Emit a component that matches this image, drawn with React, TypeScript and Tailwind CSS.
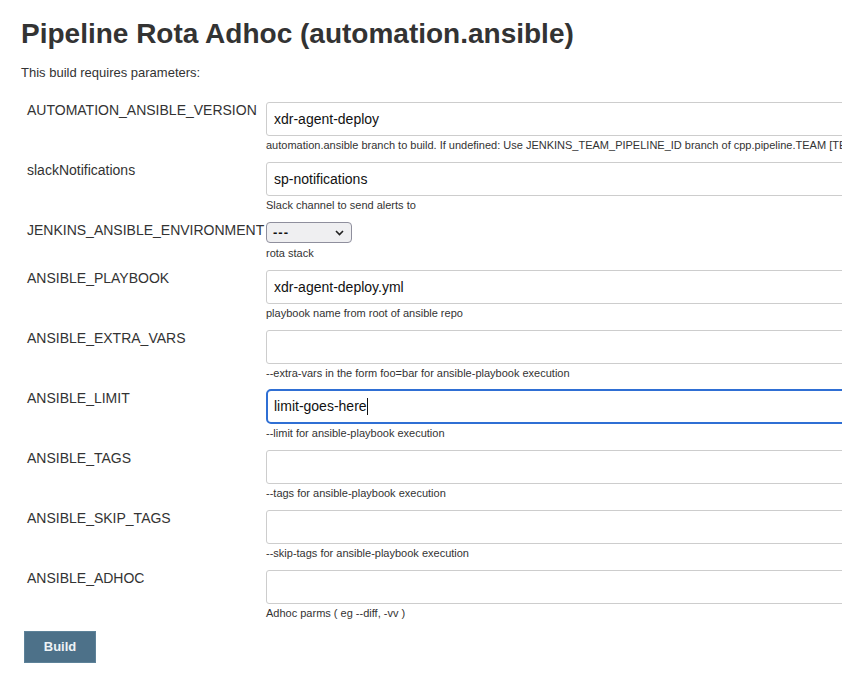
import React from "react";

type Param = {
  name: string;
  value?: string;
  desc: string;
  kind?: "text" | "select" | "focused";
};

const params: Param[] = [
  {
    name: "AUTOMATION_ANSIBLE_VERSION",
    value: "xdr-agent-deploy",
    desc: "automation.ansible branch to build. If undefined: Use JENKINS_TEAM_PIPELINE_ID branch of cpp.pipeline.TEAM [TEAM] repository",
  },
  { name: "slackNotifications", value: "sp-notifications", desc: "Slack channel to send alerts to" },
  { name: "JENKINS_ANSIBLE_ENVIRONMENT", desc: "rota stack", kind: "select" },
  { name: "ANSIBLE_PLAYBOOK", value: "xdr-agent-deploy.yml", desc: "playbook name from root of ansible repo" },
  { name: "ANSIBLE_EXTRA_VARS", desc: "--extra-vars in the form foo=bar for ansible-playbook execution" },
  { name: "ANSIBLE_LIMIT", value: "limit-goes-here", desc: "--limit for ansible-playbook execution", kind: "focused" },
  { name: "ANSIBLE_TAGS", desc: "--tags for ansible-playbook execution" },
  { name: "ANSIBLE_SKIP_TAGS", desc: "--skip-tags for ansible-playbook execution" },
  { name: "ANSIBLE_ADHOC", desc: "Adhoc parms ( eg --diff, -vv )" },
];

const Control = ({ p }: { p: Param }) => {
  if (p.kind === "select") {
    return (
      <div className="flex items-center justify-between w-[86px] h-[21px] px-[6px] border border-[#8f8f9d] rounded-[4px] bg-[#efeff1] text-[13px] leading-none text-[#111]">
        <span className="font-bold tracking-[1px]">---</span>
        <svg width="9" height="6" viewBox="0 0 9 6" className="mr-[1px]">
          <path d="M1 1l3.5 3.5L8 1" fill="none" stroke="#222" strokeWidth="1.6" />
        </svg>
      </div>
    );
  }
  if (p.kind === "focused") {
    return (
      <div className="flex items-center w-[640px] h-[35px] -mt-[1px] pl-[6px] border-2 border-[#2f6fd4] rounded-[5px] bg-white text-[14px] text-[#111]">
        <span>{p.value}</span>
        <span className="inline-block w-[1px] h-[17px] bg-[#111]" />
      </div>
    );
  }
  return (
    <input
      readOnly
      defaultValue={p.value ?? ""}
      className="block w-[640px] h-[34px] px-[7px] border border-[#cdcdcd] rounded-[3px] bg-white text-[14px] text-[#111] outline-none"
    />
  );
};

export default function App() {
  return (
    <div
      className="w-full min-h-[683px] overflow-hidden bg-white text-[#333] px-[21px] pt-[16px]"
      style={{ fontFamily: '"Liberation Sans", Arial, sans-serif' }}
    >
      <h1 className="text-[28px] leading-[36px] font-bold text-[#333] whitespace-nowrap">
        Pipeline Rota Adhoc (automation.ansible)
      </h1>
      <p className="mt-[13px] text-[13px] leading-[16px]">This build requires parameters:</p>

      <div className="mt-[21px] flex flex-col">
        {params.map((p) => (
          <div key={p.name} className="flex pb-[10px]">
            <div className="w-[245px] shrink-0 pl-[6px] text-[14px] leading-[17px] whitespace-nowrap">
              {p.name}
            </div>
            <div className="flex flex-col shrink-0">
              <Control p={p} />
              <div
                className={
                  p.kind === "select"
                    ? "mt-[4px] text-[11px] leading-[13px] text-[#333] whitespace-nowrap"
                    : "mt-[3px] text-[11px] leading-[13px] text-[#333] whitespace-nowrap"
                }
              >
                {p.desc}
              </div>
            </div>
          </div>
        ))}
      </div>

      <button className="mt-[1px] ml-[3px] w-[72px] h-[32px] bg-[#4d7189] border border-[#5d8299] text-[13px] font-bold text-[#eef3f6]">
        Build
      </button>
    </div>
  );
}
